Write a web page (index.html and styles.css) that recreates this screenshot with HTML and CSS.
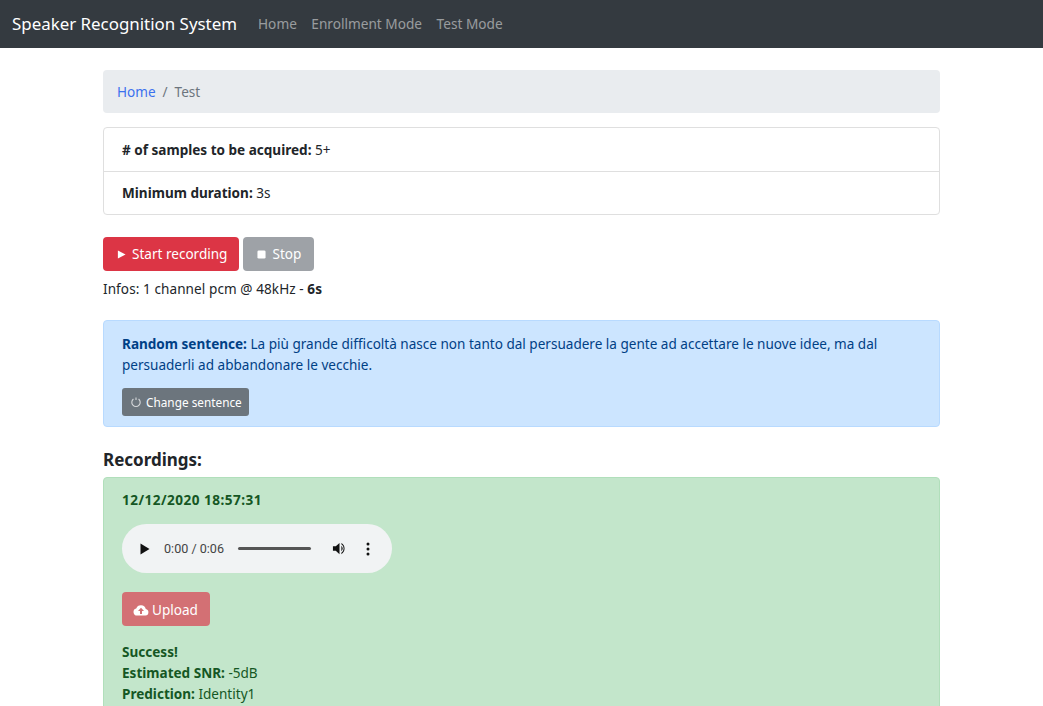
FILE: index.html
```html
<!DOCTYPE html>
<html>
<head>
    <title>Speaker Recognition System</title>
    <meta charset="utf-8">
    <link rel="stylesheet" href="styles.css">
</head>
<body>
    <nav class="navbar">
        <a class="brand" href="#">Speaker Recognition System</a>
        <a class="nav-link" href="#">Home</a>
        <a class="nav-link" href="#">Enrollment Mode</a>
        <a class="nav-link" href="#">Test Mode</a>
    </nav>
    <div class="container">
        <div class="breadcrumb">
            <a href="#">Home</a>
            <span class="sep">/</span>
            <span class="crumb-active">Test</span>
        </div>
        <ul class="list-group">
            <li><strong># of samples to be acquired:</strong> 5+</li>
            <li><strong>Minimum duration:</strong> 3s</li>
        </ul>
        <div class="controls">
            <button class="btn btn-danger" type="button">
                <svg class="icon-sm" viewBox="0 0 10 10"><path d="M1 0.5 L9.5 5 L1 9.5 Z"/></svg>Start recording
            </button>
            <button class="btn btn-stop" type="button">
                <svg class="icon-sm" viewBox="0 0 10 10"><rect x="0.5" y="0.5" width="9" height="9" rx="1.5"/></svg>Stop
            </button>
        </div>
        <p class="infos">Infos: 1 channel pcm @ 48kHz - <strong>6s</strong></p>
        <div class="alert-info">
            <p><strong>Random sentence:</strong> La più grande difficoltà nasce non tanto dal persuadere la gente ad accettare le nuove idee, ma dal persuaderli ad abbandonare le vecchie.</p>
            <button class="btn-change" type="button">
                <svg class="icon-change" viewBox="0 0 12 12"><path d="M6 1.5 V4 M3.4 3 A4.2 4.2 0 1 0 8.6 3" fill="none" stroke="#d5d7da" stroke-width="1.1"/></svg>Change sentence
            </button>
        </div>
        <h5 class="rec-title">Recordings:</h5>
        <div class="alert-success">
            <p class="rec-date"><strong>12/12/2020 18:57:31</strong></p>
            <div class="player">
                <svg class="player-play" viewBox="0 0 10 12"><path d="M0.5 0.5 L9.5 6 L0.5 11.5 Z"/></svg>
                <span class="player-time">0:00 / 0:06</span>
                <span class="player-track"></span>
                <svg class="player-vol" viewBox="0 0 16 16"><path d="M1 5.5 H4 L8 2 V14 L4 10.5 H1 Z"/><path d="M10 5 A4 4 0 0 1 10 11 Z"/><path d="M10 2 A7 7 0 0 1 10 14 V12.6 A5.6 5.6 0 0 0 10 3.4 Z"/></svg>
                <svg class="player-more" viewBox="0 0 4 14"><circle cx="2" cy="2" r="1.5"/><circle cx="2" cy="7" r="1.5"/><circle cx="2" cy="12" r="1.5"/></svg>
            </div>
            <button class="btn btn-upload" type="button">
                <svg class="icon-cloud" viewBox="0 0 16 12"><path d="M4 11.5 A3.5 3.5 0 0 1 3.2 4.6 A5 5 0 0 1 12.8 5 A3.3 3.3 0 0 1 12.5 11.5 Z"/><path d="M8 3.8 L11 7 H9 V10 H7 V7 H5 Z" fill="#d37074"/></svg>Upload
            </button>
            <div class="result">
                <strong>Success!</strong><br>
                <strong>Estimated SNR:</strong> -5dB<br>
                <strong>Prediction:</strong> Identity1
            </div>
        </div>
    </div>
</body>
</html>
```

FILE: styles.css
```css
html, body {
    height: 706px;
    overflow: hidden;
}

body {
    margin: 0;
    font-family: "Noto Sans", "Open Sans", sans-serif;
    font-size: 13.55px;
    line-height: 21px;
    color: #212529;
    background-color: #fff;
}

strong {
    font-weight: 700;
}

p {
    margin: 0;
}

.navbar {
    display: flex;
    align-items: center;
    height: 48px;
    padding: 0 12px 2px;
    box-sizing: border-box;
    background-color: #343a40;
}

.brand {
    margin-right: 21px;
    font-size: 16.9px;
    color: #fff;
    text-decoration: none;
}

.nav-link {
    margin-right: 14.5px;
    font-size: 13.65px;
    color: rgba(255, 255, 255, 0.5);
    text-decoration: none;
}

.container {
    width: 837px;
    margin: 22px 0 0 103px;
}

.breadcrumb {
    display: flex;
    align-items: center;
    height: 43px;
    padding: 2px 14px 0;
    box-sizing: border-box;
    background-color: #e9ecef;
    border-radius: 4px;
}

.breadcrumb a {
    color: #3b71ee;
    text-decoration: none;
}

.sep {
    margin: 0 7px;
    color: #6c757d;
}

.crumb-active {
    color: #6c757d;
}

.list-group {
    margin: 14px 0 0;
    padding: 0;
    list-style: none;
    border: 1px solid #dfdfdf;
    border-radius: 4px;
}

.list-group li {
    height: 43px;
    padding: 12px 18px 10px;
    box-sizing: border-box;
}

.list-group li + li {
    border-top: 1px solid #dfdfdf;
    padding-top: 11px;
}

.controls {
    display: flex;
    gap: 4px;
    margin-top: 22px;
}

.btn {
    display: inline-flex;
    align-items: center;
    height: 34px;
    padding: 0 12px 0 14px;
    font-family: inherit;
    font-size: 13.55px;
    color: #fff;
    border: 0;
    border-radius: 4px;
}

.btn-danger {
    background-color: #dc3545;
}

.btn-stop {
    padding-right: 13px;
    background-color: #9ea2a7;
}

.icon-sm {
    width: 9px;
    height: 9px;
    margin-right: 6px;
    fill: #fff;
}

.infos {
    margin-top: 8px;
    letter-spacing: 0.08px;
}

.alert-info {
    margin-top: 20px;
    padding: 13px 18px 10px;
    color: #004085;
    background-color: #cce5ff;
    border: 1px solid #b8daff;
    border-radius: 4px;
}

.btn-change {
    display: inline-flex;
    align-items: center;
    height: 28px;
    margin-top: 12px;
    padding: 0 7px 0 8px;
    font-family: inherit;
    font-size: 11.8px;
    color: #fff;
    background-color: #6c757d;
    border: 0;
    border-radius: 3px;
}

.icon-change {
    width: 12px;
    height: 12px;
    margin-right: 4px;
}

.rec-title {
    margin: 22px 0 7px;
    font-size: 17px;
    line-height: 21px;
    font-weight: 700;
}

.alert-success {
    height: 260px;
    padding: 12px 18px;
    color: #155724;
    background-color: #c3e6cb;
    border: 1px solid #b1dfbb;
    border-radius: 4px;
}

.rec-date {
    letter-spacing: 0.48px;
}

.player {
    display: flex;
    align-items: center;
    width: 270px;
    height: 49px;
    margin-top: 13px;
    padding: 0 18px;
    box-sizing: border-box;
    background-color: #f1f3f4;
    border-radius: 25px;
    color: #000;
}

.player-play {
    width: 10px;
    height: 12px;
    margin-right: 14px;
    fill: #111;
}

.player-time {
    width: 74px;
    font-family: "Roboto", sans-serif;
    font-size: 12.6px;
    color: #444;
}

.player-track {
    width: 73px;
    height: 3px;
    background-color: #555;
    border-radius: 2px;
}

.player-vol {
    width: 15px;
    height: 15px;
    margin-left: 21px;
    fill: #111;
}

.player-more {
    width: 4px;
    height: 14px;
    margin-left: 19px;
    fill: #111;
}

.btn-upload {
    margin-top: 19px;
    padding: 1px 12px 0 11px;
    background-color: #d37074;
}

.icon-cloud {
    width: 16px;
    height: 12px;
    margin-right: 3px;
    fill: #fff;
}

.result {
    margin-top: 16px;
}
```
